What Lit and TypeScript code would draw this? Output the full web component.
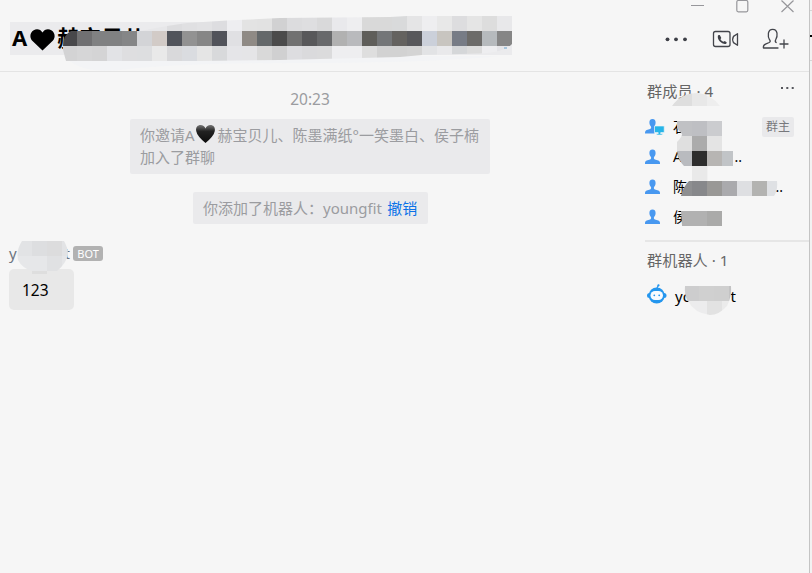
import { LitElement, html, css, svg } from "lit";
import { customElement } from "lit/decorators.js";

type Cell = [number, number, string];

const row = (x: number, y: number, colors: string): Cell[] =>
  colors.split(" ").map((c, i) => [x + i * 15, y, "#" + c] as Cell);

const headCells: Cell[] = [
  ...row(137, 16, "e7e7e9 e7e7e9 dddddf e0e0e2 e2e2e4 dddde0 eeeef1 e3e3e3 e2e2e2 d1d1d2 dcdcde dedee0 d9d9da e9e9ec eeeef0 d9d9d9 d9d9d9 d9dadb e5e5e6 eeeef0 e8e8e8 dddddf e5e5e5 dddddd e8e8ea"),
  ...row(62, 31, "48484b 707072 808182 808182 858687 d3d4d7 d2cbc7 51545b 929292 868686 51535a e0e0e3 8f8a85 64686a 4b4b4b 717171 58585a 68696b b1b1b1 b9babd 5f5e5a 747678 64625f 58585b cbd0da c8c5c0 777c86 6c6b69 b6babd 868686"),
  ...row(62, 46, "d3d3d4 d6d6d7 d4d4d5 e2e3e6 dedee0 dddee0 e9e9e9 d9d9db dadce0 e5e5e5 d8d9db e5e5e8 e5e5e7 d9d9d9 d0d0d1 dddde0 dadadc dbdbdc eeeef0 eeeef0 dedede d2d2d2 d2d2d2 d4d4d4 e2e3e5 e9e9eb d5d7d9 dddddd eeeef0 e5e5e8"),
];

const sideCells: Cell[] = [
  ...row(662, 91, "dedede dedede e8e8e8 eeeeee eeeeee"),
  ...row(677, 121, "c0c1c4 bebfc3 cbcccf"),
  ...row(677, 136, "dfdfdf ababab e4e4e4"),
  ...row(677, 151, "b9bbbf 2d2d2d b7b5b3 c1c4c7"),
  ...row(677, 166, "efefef e9e9e9 f1f1f1"),
  ...row(677, 181, "8e8f91 87888b 999896 aaaaad dedfe2 b3b3b1 dfe1e4"),
  ...row(677, 211, "b1b1b1 b1b1b1 aaaaa9"),
];

const cells = (list: Cell[]) =>
  list.map(([x, y, c]) => svg`<rect x=${x} y=${y} width="15" height="15" fill=${c}></rect>`);

const person = html`<svg width="28" height="16" viewBox="0 0 28 16">
  <path fill="#4898f0" d="M7.500.5C5.200.5 4.300 2 4.400 4.300c.1 1.800.8 2.800 1.500 3.700.5.8.3 2-.8 2.400L1.700 11.600C.5 12.100 0 13 0 14v1h15v-1c0-1-.5-1.900-1.700-2.400L9.900 10.400c-1.100-.4-1.300-1.600-.8-2.400.7-.9 1.400-1.900 1.500-3.700C10.700 2 9.800.5 7.500.5z"/></svg>`;

const personOnline = html`<svg width="28" height="16" viewBox="0 0 28 16">
  <path fill="#4898f0" d="M7.500 0C5.200 0 4.300 1.500 4.400 3.800c.1 1.800.8 2.800 1.500 3.700.5.800.3 2-.8 2.400L1.700 11.100C.5 11.600 0 12.500 0 14.500H9.500V7.200c.6-.9 1-1.900 1.100-3.400C10.700 1.500 9.800 0 7.500 0z"/>
  <path fill="#27b5e8" stroke="#f6f6f6" stroke-width=".6" d="M9.500 7h9.700v6.600h-3.500v1.200H17.500v1.200h-6v-1.200h1.700v-1.200H9.500z"/></svg>`;

@customElement("app-root")
export class AppRoot extends LitElement {
  static styles = css`
    :host {
      display: flex;
      position: relative;
      width: 812px;
      height: 573px;
      overflow: hidden;
      background: #f6f6f6;
      font: 15px/22px "Noto Sans", "Noto Sans CJK SC", sans-serif;
      color: #111;
    }
    * { box-sizing: border-box; }
    svg { display: block; flex: none; }
    .window { width: 809px; display: flex; flex-direction: column; }
    header { height: 72px; display: flex; justify-content: space-between; border-bottom: 1px solid #e4e4e4; }
    .title {
      display: flex; align-items: center; margin: 22px 0 0 10px; width: 502px; height: 33px;
      background: #ebebed; padding: 0 0 2px 2px; color: #000; white-space: nowrap; overflow: hidden;
      font: bold 22px/33px "Noto Sans", "Noto Sans CJK SC", sans-serif;
    }
    .title svg { margin: 4px 2px 0 3px; }
    .controls { width: 150px; }
    .body { flex: 1; display: flex; }
    main { width: 645px; display: flex; flex-direction: column; }
    .time { margin-top: 16px; width: 620px; text-align: center; color: #9b9ca0; font-size: 15.5px; }
    .notice {
      background: #eaeaec; color: #9b9ca0; border-radius: 2px; white-space: nowrap;
      padding: 5px 10px; align-self: flex-start;
    }
    .invite { margin: 9px 0 0 130px; width: 360px; height: 55px; }
    .invite .line { display: flex; height: 22px; }
    .invite svg { margin-right: 2px; }
    .robot { margin: 18px 0 0 193px; width: 235px; height: 32px; }
    .undo { color: #0a72e8; margin-left: 1.5px; }
    .sender { display: flex; align-items: center; height: 22px; margin: 18px 0 0 9px; color: #6c7480; }
    .sender .name { width: 61px; display: flex; justify-content: space-between; }
    .bot {
      margin-left: 3px; width: 30px; height: 15px; border-radius: 3px; background: #b2b2b2; color: #fff;
      font-size: 11px; line-height: 16px; text-align: center;
    }
    .bubble {
      margin: 5px 0 0 9px; width: 65px; height: 41px; border-radius: 5px; background: #e8e8e8;
      padding-left: 13px; font-size: 15.5px; line-height: 43px; color: #000;
    }
    aside { width: 164px; display: flex; flex-direction: column; }
    .section { display: flex; height: 40px; padding: 8px 14px 0 2px; justify-content: space-between; color: #666; font-size: 15.2px; }
    .member { display: flex; align-items: center; height: 30px; white-space: nowrap; color: #000; font-size: 14px; }
    .name.short { width: 69px; }
    .name.long { width: 110px; }
    .member .name { display: flex; justify-content: space-between; }
    .member .owner {
      margin-left: auto; margin-right: 15px; width: 32px; height: 20px; border-radius: 2px;
      background: #e9e9eb; color: #77787c; font-size: 12px; line-height: 20px; text-align: center;
    }
    .robots { border-top: 2px solid #e6e6e6; margin-top: 8px; height: 39px; padding-top: 7px; }
    .bots { height: 34px; font-size: 15px; }
    .bots svg { margin: -4px 8px 0 2px; }
    .bots .name { width: 61px; }
    .edge { width: 3px; border-left: 1px solid #c4c4c4; display: flex; flex-direction: column; background: #f2f2f2; }
    .edge i { height: 1px; background: #d6d6d6; }
    .edge .top { margin-top: 10px; }
    .edge .dark { margin-top: 24px; height: 2px; background: #000; }
    .edge .low { margin-top: 23px; }
    .mosaic { position: absolute; left: 0; top: 0; pointer-events: none; }
  `;

  render() {
    return html`
      <div class="window">
        <header>
          <div class="title">
            <span>A</span>
            <svg width="25" height="22" viewBox="0 0 25 22"><path d="M12.5 21.5 2 11.5C-.8 8 .2 3 3.7 1.200 7 -.6 10.800.5 12.500 3.600 14.200.5 18 -.6 21.300 1.200 24.800 3 25.800 8 23 11.500z"/></svg>
            <span>赫宝贝儿</span>
          </div>
          <div class="controls">
            <svg width="150" height="14" viewBox="0 0 150 14" fill="none" stroke="#97979b" stroke-width="1.2">
              <path d="M32 5.500h13M122.500.5l12 11.500M134.500.5l-12 11.500"/><rect x="77.800" y=".5" width="11" height="11.300" rx="1.500"/>
            </svg>
            <svg width="150" height="50" viewBox="0 14 150 50" fill="none" stroke="#43454b" stroke-width="1.300" stroke-linejoin="round" stroke-linecap="round">
              <g fill="#3d3f46" stroke="none"><circle cx="8.500" cy="39.300" r="1.900"/><circle cx="17" cy="39.300" r="1.900"/><circle cx="26" cy="39.300" r="1.900"/></g>
              <rect x="54.500" y="31.500" width="16.500" height="15" rx="2"/>
              <path d="M78.500 33.700v11.600l-4-2.700q-1.700-3.100 0-6.200z"/>
              <path stroke="none" fill="#3d3f46" d="M59 35.300l1.800-.4 1.500 3-.9 1.300q1.300 2.200 3.200 2.600l1.200-.8 2 1.500-.6 1.300q-3.500.8-6.300-2.200T59 35.300z"/>
              <path d="M119 48h-14.500q-.7-2.500 2-3.800l3.700-1.700q2-1 .2-3-1.500-2.500-1-6.300.7-3.900 4.300-3.900t4.300 3.900q.5 3.800-1.200 6.300-1.200 2 .4 3M125 40v8M121 44h8"/>
            </svg>
          </div>
        </header>
        <div class="body">
          <main>
            <div class="time">20:23</div>
            <div class="notice invite">
              <div class="line"><span>你邀请A</span><svg width="21" height="20" viewBox="0 0 21 20">
                <defs><linearGradient id="g" x1="0" y1="0" x2="0" y2="1"><stop offset="0" stop-color="#777"/><stop offset=".35" stop-color="#222"/><stop offset="1" stop-color="#0c0c0c"/></linearGradient></defs>
                <path fill="url(#g)" d="M10.500 19Q2 12 1.200 7C.5 3 3 1 5.500 1c2.400 0 4.200 1.400 5 3.500.8-2.100 2.600-3.500 5-3.500 2.500 0 5 2 4.300 6q-.8 5-9.300 12z"/></svg><span>赫宝贝儿、陈墨满纸°一笑墨白、侯子楠</span></div>
              <div class="line">加入了群聊</div>
            </div>
            <div class="notice robot">你添加了机器人：youngfit <span class="undo">撤销</span></div>
            <div class="sender"><span class="name"><span>y</span><span>t</span></span><span class="bot">BOT</span></div>
            <div class="bubble">123</div>
          </main>
          <aside>
            <div class="section"><span>群成员 · 4</span>
              <svg width="16" height="16" viewBox="0 0 16 16" fill="#55565c"><path d="M2 7h2v2H2zM7.300 7h2v2h-2zM12.700 7h2v2h-2z"/></svg></div>
            <div class="member">${personOnline}<span>石</span><span class="owner">群主</span></div>
            <div class="member">${person}<span class="name short"><span>A</span><span>..</span></span></div>
            <div class="member">${person}<span class="name long"><span>陈</span><span>..</span></span></div>
            <div class="member">${person}<span>侯</span></div>
            <div class="section robots"><span>群机器人 · 1</span></div>
            <div class="member bots">
              <svg width="20" height="20" viewBox="0 0 20 20"><path d="m10 4 1.500-3" stroke="#2496ee" stroke-width="1.200"/><circle cx="11.500" cy="1.300" r="1.100" fill="#2496ee"/><rect x="0" y="9" width="19.500" height="5" rx="2.500" fill="#2496ee"/><circle cx="9.700" cy="11.500" r="8" fill="#2496ee"/><rect x="3.500" y="7" width="12.500" height="9" rx="4.500" fill="#f8fbff"/><circle cx="7.300" cy="11.300" r=".9" fill="#2496ee"/><circle cx="12.200" cy="11.300" r=".9" fill="#2496ee"/></svg>
              <span class="name"><span>yo</span><span>t</span></span></div>
          </aside>
        </div>
      </div>
      <div class="edge"><i class="top"></i><i class="dark"></i><i class="low"></i></div>
      <svg class="mosaic" width="812" height="573" viewBox="0 0 812 573">
        <defs>
          <clipPath id="head"><path d="M63 50Q62 35 71 31H140L167 26 187 23 227 20.500 280 18 390 17 407 16H512V44Q503 53 480 53.500L422 55 400 57 280 60 200 61H66z"/></clipPath>
          <clipPath id="side"><path d="M672 106Q681 93 698 93 712 95 720 106zM673 121H722V151H733V166H708V181H777Q778 190 774 196H681Q683 187 689 181H692V166H684Q678 160 677 151V142Q682 137 682 134 676 128 673 121zM681 211H722V226H682z"/></clipPath>
          <clipPath id="bot"><path d="M685 286H731Q732 296 727 306 719 315 710 315 694 313 688 301 684 295 685 286z"/></clipPath>
          <clipPath id="from"><path d="M22 241H64Q68 248 68 254 66 264 57 271H47V274H32V271Q22 268 18 260 16 250 22 241z"/></clipPath>
        </defs>
        <path fill="#f3f4f6" d="M64 56H500Q430 63 300 63T120 70 Q80 74 64 56z"/>
        <g clip-path="url(#head)" shape-rendering="crispEdges">${cells(headCells)}</g>
        <path d="M504 48h3" stroke="#6aa5cf"/>
        <g clip-path="url(#side)" shape-rendering="crispEdges">${cells(sideCells)}</g>
        <g clip-path="url(#bot)" shape-rendering="crispEdges">${cells([
          ...row(684, 286, "cdcdce d0d0d0 cfcfcf c3c3c4"), ...row(677, 301, "ececec ececed e2e2e2 ebebeb"),
        ])}</g>
        <g clip-path="url(#from)" shape-rendering="crispEdges">${cells([
          ...row(17, 241, "e2e3e5 dddee0 dcdcdd e2e3e5"), ...row(17, 256, "e6e7e9 e6e7e9 e0e1e3 e5e6e8"), ...row(32, 271, "dedede"),
        ])}</g>
      </svg>
    `;
  }
}
